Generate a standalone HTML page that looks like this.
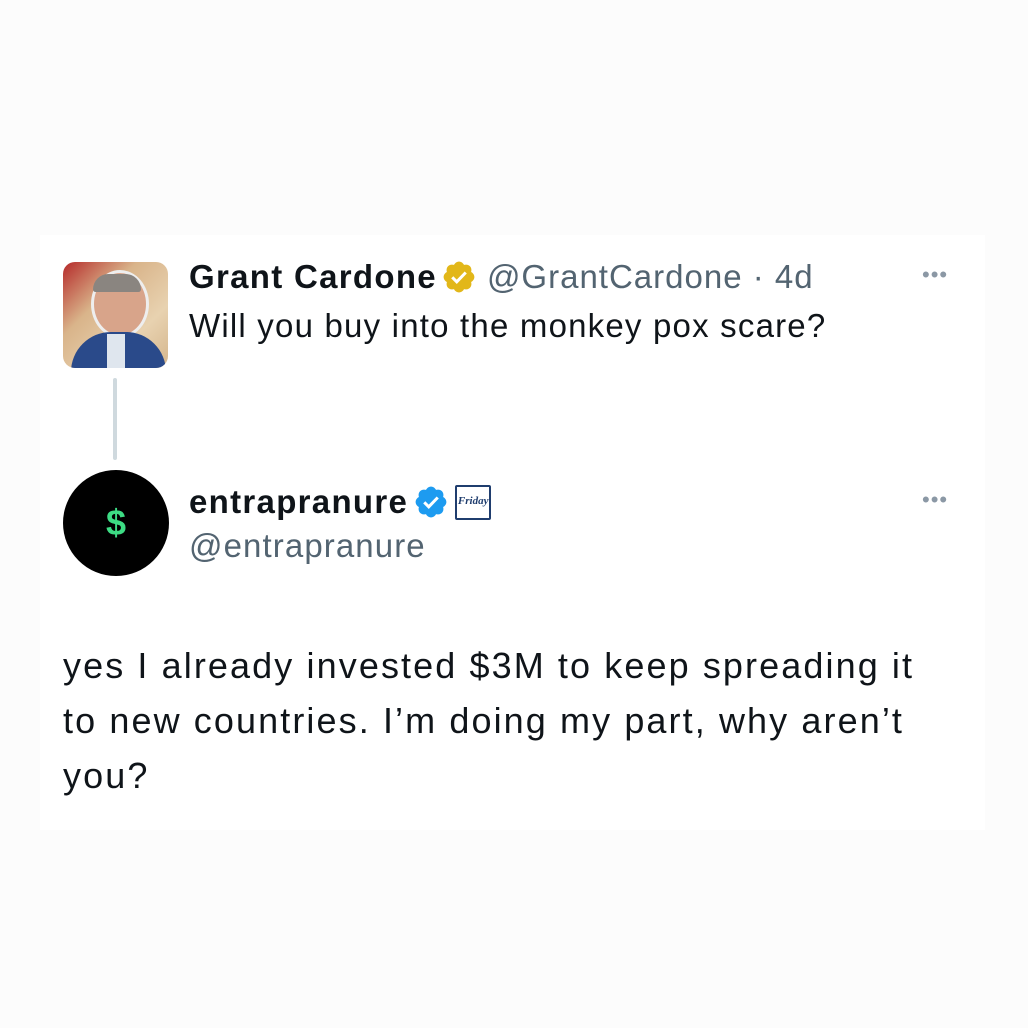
<!DOCTYPE html>
<html><head><style>
html,body{margin:0;padding:0;}
body{width:1028px;height:1028px;background:#fcfcfc;position:relative;overflow:hidden;font-family:"Liberation Sans",Arial,sans-serif;color:#0f1419;}
.card{position:absolute;left:40px;top:235px;width:945px;height:595px;background:#fff;}
.a{position:absolute;}
.row{position:absolute;display:flex;align-items:center;white-space:nowrap;}
.name{font-weight:bold;font-size:33px;letter-spacing:1.3px;}
.gray{color:#536471;}
.dots{position:absolute;color:#8b98a5;font-size:22px;letter-spacing:1px;}
svg{display:block}
</style></head><body>
<div class="card"></div>
<div class="a" style="left:63px;top:262px;width:105px;height:106px;border-radius:12px;overflow:hidden;background:linear-gradient(135deg,#b52a2a 0%,#d9b48a 35%,#e8d2b0 70%,#d4b58c 100%);">
 <div class="a" style="left:28px;top:8px;width:52px;height:62px;border-radius:50%;background:#d8a48a;border:3px solid #eee;"></div>
 <div class="a" style="left:30px;top:12px;width:48px;height:18px;border-radius:24px 24px 4px 4px;background:#8a8580;"></div>
 <div class="a" style="left:8px;top:70px;width:95px;height:50px;border-radius:40px 40px 0 0;background:#2a4a8a;"></div>
 <div class="a" style="left:44px;top:72px;width:18px;height:36px;background:#dfe6ee;"></div>
</div>
<div class="a" style="left:113px;top:378px;width:4px;height:82px;background:#cfd9de;border-radius:2px;"></div>
<div class="a" style="left:63px;top:470px;width:106px;height:106px;border-radius:50%;background:#000;color:#3ddc84;font-weight:bold;font-size:36px;text-align:center;line-height:106px;">$</div>

<div class="row" style="left:189px;top:257px;height:40px;">
<span class="name">Grant Cardone</span>
<svg style="margin-left:4px" width="36" height="36" viewBox="0 0 24 24"><path fill="#e2b719" d="M22.25 12c0-1.43-.88-2.670-2.19-3.34.46-1.39.2-2.9-.81-3.91s-2.52-1.27-3.91-.81c-.66-1.31-1.91-2.19-3.34-2.19s-2.67.88-3.330 2.19c-1.4-.46-2.91-.2-3.92.81s-1.26 2.52-.8 3.91c-1.31.67-2.2 1.91-2.2 3.34s.89 2.67 2.2 3.34c-.46 1.39-.21 2.9.8 3.91s2.52 1.26 3.910.81c.67 1.31 1.91 2.19 3.34 2.19s2.68-.88 3.34-2.19c1.39.45 2.9.2 3.91-.81s1.27-2.520.81-3.91c1.31-.67 2.19-1.91 2.19-3.34z"/><path fill="none" stroke="#fff" stroke-width="2" d="M7.5 12.2l3 3 6-6.2"/></svg>
<span class="gray" style="margin-left:10px;font-size:33px;letter-spacing:1px;">@GrantCardone · 4d</span>
</div>
<div class="a" style="left:189px;top:307px;font-size:33px;letter-spacing:1.2px;white-space:nowrap;">Will you buy into the monkey pox scare?</div>
<div class="dots" style="left:922px;top:262px;">•••</div>

<div class="row" style="left:189px;top:482px;height:40px;">
<span class="name">entrapranure</span>
<svg style="margin-left:5px" width="36" height="36" viewBox="0 0 24 24"><path fill="#1d9bf0" d="M22.25 12c0-1.43-.88-2.67-2.19-3.34.46-1.39.2-2.9-.81-3.91s-2.52-1.27-3.91-.81c-.66-1.31-1.91-2.19-3.34-2.19s-2.67.88-3.33 2.19c-1.4-.46-2.91-.2-3.92.81s-1.26 2.52-.8 3.91c-1.31.67-2.2 1.910-2.2 3.34s.89 2.67 2.2 3.34c-.46 1.39-.21 2.9.8 3.91s2.52 1.26 3.91.81c.67 1.31 1.91 2.19 3.34 2.19s2.68-.88 3.34-2.19c1.39.45 2.9.2 3.91-.81s1.27-2.52.81-3.91c1.31-.67 2.19-1.91 2.19-3.34z"/><path fill="none" stroke="#fff" stroke-width="2" d="M7.5 12.2l3 3 6-6.2"/></svg>
<span style="margin-left:6px;width:36px;height:35px;border:2px solid #1f3d6e;box-sizing:border-box;border-radius:2px;font-family:'Liberation Serif',serif;font-style:italic;font-weight:bold;font-size:11px;color:#1f3d6e;text-align:center;line-height:28px;">Friday</span>
</div>
<div class="a gray" style="left:189px;top:527px;font-size:33px;letter-spacing:1.1px;">@entrapranure</div>
<div class="dots" style="left:922px;top:487px;">•••</div>

<div class="a" style="left:63px;top:638px;font-size:36px;letter-spacing:2.1px;line-height:55px;width:920px;white-space:nowrap;">yes I already invested $3M to keep spreading it<br>to new countries. I’m doing my part, why aren’t<br>you?</div>
</body></html>
